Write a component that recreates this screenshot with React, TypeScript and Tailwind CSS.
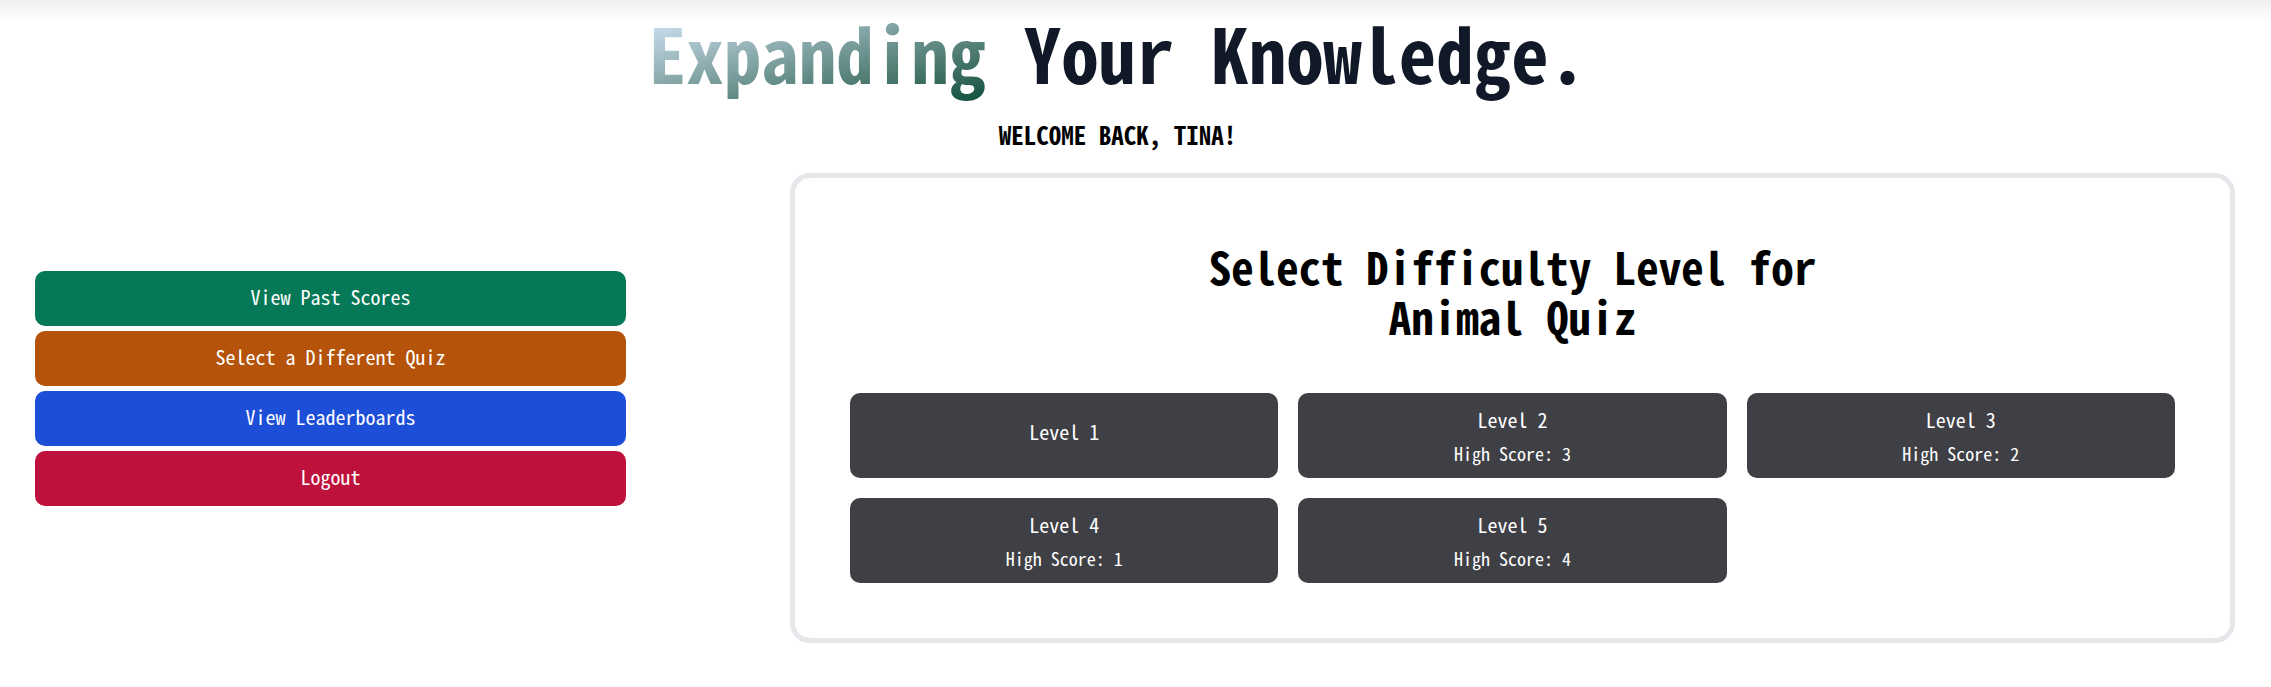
import React from "react";

type Action = { label: string; color: string };
type Level = { id: number; highScore?: number };

const actions: Action[] = [
  { label: "View Past Scores", color: "bg-[#047857]" },
  { label: "Select a Different Quiz", color: "bg-[#b45309]" },
  { label: "View Leaderboards", color: "bg-[#1d4ed8]" },
  { label: "Logout", color: "bg-[#be123c]" },
];

const levels: Level[] = [
  { id: 1 },
  { id: 2, highScore: 3 },
  { id: 3, highScore: 2 },
  { id: 4, highScore: 1 },
  { id: 5, highScore: 4 },
];

function Header() {
  return (
    <header className="flex flex-col items-center text-center">
      <h1 className="text-[75px] leading-[80px] font-bold text-[#111827]">
        <span className="-mb-3 inline-block bg-linear-to-br from-[#dbeafe] to-[#064e3b] bg-clip-text pb-3 text-transparent">Expanding</span>{" "}
        Your Knowledge.
      </h1>
      <p className="mt-[25px] text-[25px] leading-[35px] font-semibold text-black uppercase">Welcome back, Tina!</p>
    </header>
  );
}

function LevelButton({ level }: { level: Level }) {
  const hasScore = level.highScore !== undefined;
  return (
    <button
      type="button"
      className={`flex min-h-[85px] flex-col items-center justify-center rounded-[10px] bg-[#3f3f46] text-white ${hasScore ? "" : "pb-2"}`}
    >
      <span className="text-[20px] leading-[30px]">Level {level.id}</span>
      {hasScore && <span className="mt-1 text-[18px] leading-[28px]">High Score: {level.highScore}</span>}
    </button>
  );
}

export default function App() {
  return (
    <div className="min-h-screen bg-white bg-linear-to-b from-[#eeeeee] to-white bg-[length:100%_20px] bg-no-repeat pt-3 pr-9 pb-11 font-['Noto_Sans_Mono_CJK_JP','Liberation_Mono',monospace]">
      <Header />
      <main className="mt-[21px] grid grid-cols-[591fr_1445fr] items-center gap-x-[164px] pl-[35px]">
        <nav aria-label="Quiz actions" className="mb-10 flex flex-col gap-[5px]">
          {actions.map((a) => (
            <button key={a.label} type="button" className={`h-[55px] rounded-[10px] pb-[3px] text-[20px] leading-[30px] text-white ${a.color}`}>
              {a.label}
            </button>
          ))}
        </nav>
        <section className="rounded-[20px] border-5 border-[#e5e7eb] p-[55px]">
          <h2 className="mx-auto mt-2 mb-[52px] max-w-2xl text-center text-[45px] leading-[50px] font-bold text-black">
            Select Difficulty Level for Animal Quiz
          </h2>
          <div className="grid grid-cols-3 gap-5">
            {levels.map((l) => (
              <LevelButton key={l.id} level={l} />
            ))}
          </div>
        </section>
      </main>
    </div>
  );
}
